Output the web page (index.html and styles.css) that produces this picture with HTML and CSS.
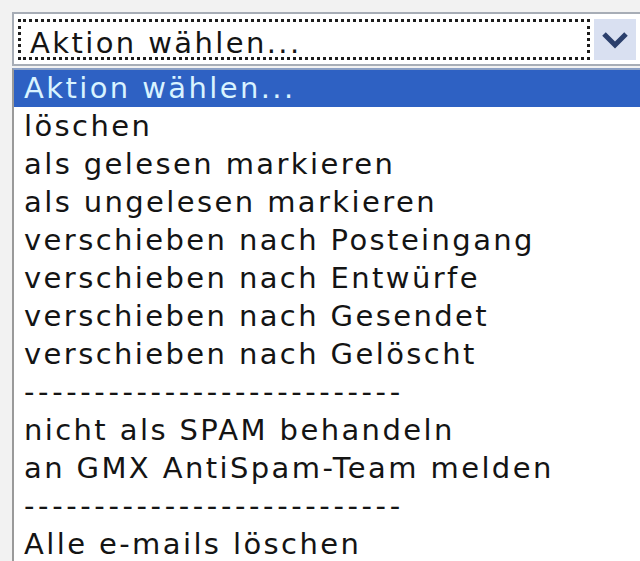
FILE: index.html
```html
<!DOCTYPE html>
<html lang="de">
<head>
    <meta charset="UTF-8">
    <meta name="viewport" content="width=device-width, initial-scale=1.0">
    <title>Aktion wählen</title>
    <link rel="stylesheet" href="styles.css">
</head>
<body>
    <div class="combo">
        <div class="combo-value">Aktion wählen...</div>
        <div class="combo-btn">
            <svg width="30" height="22" viewBox="0 0 30 22">
                <path d="M4 5 L15 16 L26 5" fill="none" stroke="#2b3f6c" stroke-width="5" stroke-linejoin="miter"/>
            </svg>
        </div>
    </div>

    <ul class="options">
        <li class="option selected">Aktion wählen...</li>
        <li class="option">löschen</li>
        <li class="option">als gelesen markieren</li>
        <li class="option">als ungelesen markieren</li>
        <li class="option">verschieben nach Posteingang</li>
        <li class="option">verschieben nach Entwürfe</li>
        <li class="option">verschieben nach Gesendet</li>
        <li class="option">verschieben nach Gelöscht</li>
        <li class="option divider">---------------------------</li>
        <li class="option">nicht als SPAM behandeln</li>
        <li class="option">an GMX AntiSpam-Team melden</li>
        <li class="option divider">---------------------------</li>
        <li class="option">Alle e-mails löschen</li>
    </ul>
</body>
</html>
```

FILE: styles.css
```css
* {
    margin: 0;
    padding: 0;
    box-sizing: border-box;
}

body {
    background-color: #f2f2f2;
    font-family: 'DejaVu Sans', Verdana, sans-serif;
    color: #141414;
    overflow: hidden;
}

.combo {
    display: flex;
    margin: 12px 0 0 12px;
    height: 54px;
    padding: 5px 4px 4px 4px;
    background-color: #fff;
    border: 2px solid #a7adb6;
    border-right: none;
}

.combo-value {
    flex: 1;
    border: 3px dotted #1c1c1c;
    font-size: 29px;
    line-height: 42px;
    letter-spacing: 2.4px;
    padding-left: 9px;
}

.combo-btn {
    width: 42px;
    margin-left: 4px;
    display: flex;
    align-items: center;
    justify-content: center;
    background-color: #d9e0f1;
}

.options {
    list-style: none;
    margin-left: 12px;
    margin-top: 2px;
    background-color: #fff;
    border-left: 2px solid #9a9a9a;
    border-top: 2px solid #8a9fc4;
}

.option {
    height: 38px;
    line-height: 38px;
    font-size: 29px;
    letter-spacing: 2.4px;
    padding-left: 10px;
    white-space: nowrap;
}

.option.selected {
    background-color: #2e61c3;
    color: #d9f3ff;
    height: 37px;
    line-height: 36px;
}

.divider {
    letter-spacing: 3.6px;
}
```
